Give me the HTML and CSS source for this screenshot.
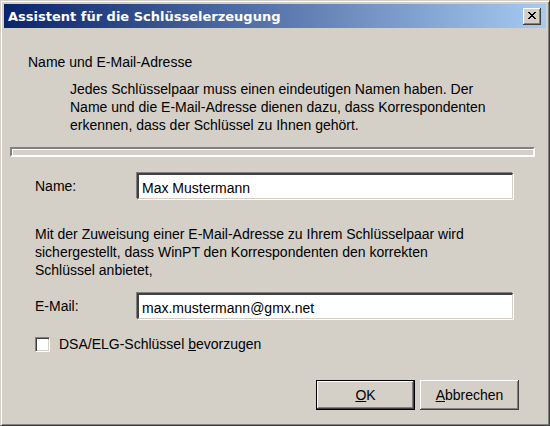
FILE: index.html
```html
<!DOCTYPE html>
<html lang="de">
<head>
    <meta charset="UTF-8">
    <title>Assistent für die Schlüsselerzeugung</title>
    <link rel="stylesheet" href="styles.css">
</head>
<body>
    <div class="window">
        <div class="titlebar">
            <span class="title">Assistent für die Schlüsselerzeugung</span>
            <button class="close" type="button" aria-label="Schließen">
                <svg width="8" height="7" viewBox="0 0 8 7">
                    <path d="M0 0h2v1h1v1h2v-1h1v-1h2v1h-1v1h-1v1h-1v1h1v1h1v1h1v1h-2v-1h-1v-1h-2v1h-1v1h-2v-1h1v-1h1v-1h1v-1h-1v-1h-1v-1h-1z" fill="#000"/>
                </svg>
            </button>
        </div>

        <div class="header">
            <div class="header-title">Name und E-Mail-Adresse</div>
            <p class="header-text">
                Jedes Schlüsselpaar muss einen eindeutigen Namen haben. Der<br>
                Name und die E-Mail-Adresse dienen dazu, dass Korrespondenten<br>
                erkennen, dass der Schlüssel zu Ihnen gehört.
            </p>
        </div>

        <div class="separator"></div>

        <div class="content">
            <div class="field">
                <label class="field-label" for="name">Name:</label>
                <input class="field-input" id="name" type="text" value="Max Mustermann">
            </div>

            <p class="info">
                Mit der Zuweisung einer E-Mail-Adresse zu Ihrem Schlüsselpaar wird<br>
                sichergestellt, dass WinPT den Korrespondenten den korrekten<br>
                Schlüssel anbietet,
            </p>

            <div class="field">
                <label class="field-label" for="email">E-Mail:</label>
                <input class="field-input" id="email" type="text" value="max.mustermann@gmx.net">
            </div>

            <label class="check">
                <span class="check-box"></span>
                <span>DSA/ELG-Schlüssel <u>b</u>evorzugen</span>
            </label>
        </div>

        <div class="buttons">
            <button class="btn btn-default" type="button"><u>O</u>K</button>
            <button class="btn" type="button"><u>A</u>bbrechen</button>
        </div>
    </div>
</body>
</html>
```

FILE: styles.css
```css
/* Reset */
* {
    margin: 0;
    padding: 0;
    box-sizing: border-box;
}

body {
    width: 550px;
    height: 426px;
    font-family: 'Liberation Sans', Arial, sans-serif;
    font-size: 14px;
    color: #000;
    background-color: #d4d0c8;
    overflow: hidden;
}

/* Fensterrahmen */
.window {
    width: 550px;
    height: 426px;
    background-color: #d4d0c8;
    border-top: 1px solid #d4d0c8;
    border-left: 1px solid #d4d0c8;
    border-right: 1px solid #404040;
    border-bottom: 1px solid #404040;
    box-shadow: inset 1px 1px 0 #fff, inset -1px -1px 0 #808080;
    padding: 3px;
    display: flex;
    flex-direction: column;
}

.titlebar {
    height: 24px;
    background: linear-gradient(to right, #0a246a, #a6caf0);
    display: flex;
    align-items: center;
    justify-content: space-between;
    padding: 0 5px 0 4px;
}

.title {
    color: #fff;
    font-family: 'DejaVu Sans', Verdana, sans-serif;
    font-weight: bold;
    font-size: 13px;
}

.close {
    width: 18px;
    height: 17px;
    background-color: #d4d0c8;
    border: none;
    box-shadow: inset -1px -1px 0 #404040, inset 1px 1px 0 #fff, inset -2px -2px 0 #808080;
    display: flex;
    align-items: center;
    justify-content: center;
    padding-bottom: 1px;
}

/* Kopfbereich */
.header {
    padding: 25px 0 0 24px;
}

.header-title {
    line-height: 18px;
}

.header-text {
    margin-top: 9px;
    padding-left: 42px;
    line-height: 18px;
}

.separator {
    margin: 13px 11px 0 6px;
    height: 10px;
    border-top: 2px solid #808080;
    border-left: 2px solid #808080;
    border-bottom: 2px solid #fff;
    border-right: 2px solid #fff;
    box-shadow: inset 1px 1px 0 #fff;
}

/* Formular */
.content {
    padding: 16px 0 0 31px;
}

.field {
    display: flex;
    align-items: center;
}

.field-label {
    width: 102px;
}

.field-input {
    width: 376px;
    height: 26px;
    font-family: 'Liberation Sans', Arial, sans-serif;
    font-size: 14px;
    padding: 2px 3px 0;
    background-color: #fff;
    border-top: 2px solid #404040;
    border-left: 2px solid #404040;
    border-right: 1px solid #d4d0c8;
    border-bottom: 1px solid #d4d0c8;
    box-shadow: -1px -1px 0 #808080, 1px 1px 0 #fff;
    outline: none;
}

.info {
    margin: 26px 0 14px;
    line-height: 18px;
}

.check {
    margin-top: 17px;
    display: flex;
    align-items: center;
    gap: 9px;
}

.check-box {
    width: 15px;
    height: 15px;
    background-color: #fff;
    border-top: 1px solid #808080;
    border-left: 1px solid #808080;
    border-right: 1px solid #fff;
    border-bottom: 1px solid #fff;
    box-shadow: inset 1px 1px 0 #404040, inset -1px -1px 0 #d4d0c8;
}

/* Schaltflächen */
.buttons {
    margin-top: auto;
    padding: 0 27px 12px 0;
    display: flex;
    justify-content: flex-end;
    gap: 5px;
}

.btn {
    width: 99px;
    height: 30px;
    font-family: 'Liberation Sans', Arial, sans-serif;
    font-size: 14px;
    color: #000;
    background-color: #d4d0c8;
    border: none;
    box-shadow: inset -1px -1px 0 #404040, inset 1px 1px 0 #fff, inset -2px -2px 0 #808080;
}

.btn-default {
    border: 1px solid #000;
}
```
